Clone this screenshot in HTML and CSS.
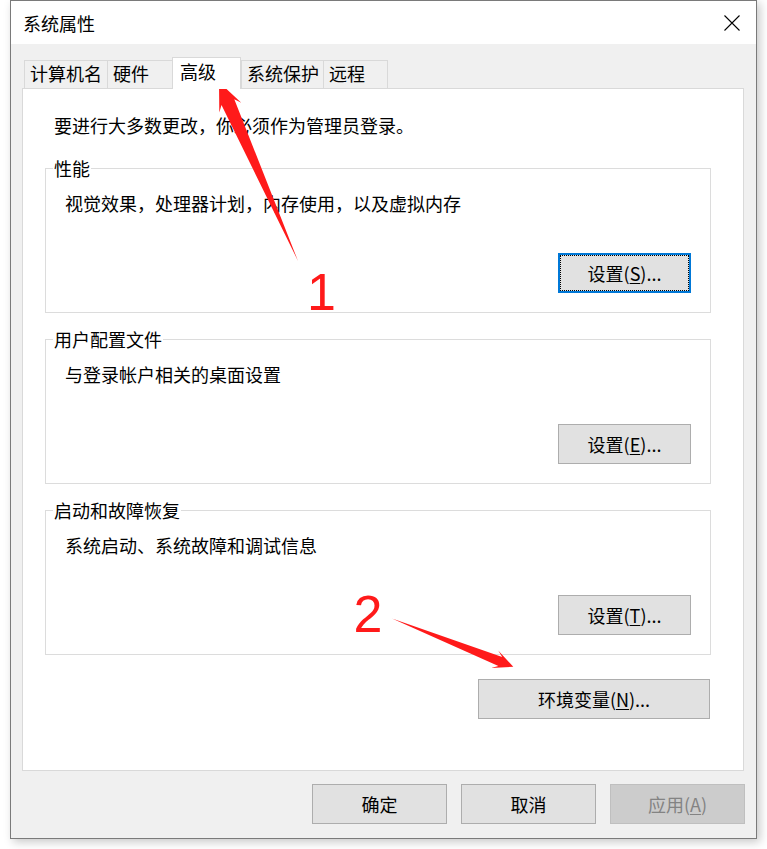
FILE: index.html
```html
<!DOCTYPE html>
<html lang="zh-CN">
<head>
<meta charset="utf-8">
<title>系统属性</title>
<link rel="stylesheet" href="styles.css">
</head>
<body>
<div class="window">
  <div class="titlebar">
    <span class="title">系统属性</span>
    <svg class="close" width="16" height="16" viewBox="0 0 16 16"><path d="M0.5 0.5 L15.5 15.5 M15.5 0.5 L0.5 15.5" stroke="#000" stroke-width="1.1" fill="none"/></svg>
  </div>
  <div class="body">
    <div class="tabs">
      <div class="tab tab-name">计算机名</div>
      <div class="tab tab-hw">硬件</div>
      <div class="tab active">高级</div>
      <div class="tab tab-protect">系统保护</div>
      <div class="tab tab-remote">远程</div>
    </div>
    <div class="panel">
      <p class="note">要进行大多数更改，你必须作为管理员登录。</p>
      <fieldset class="group">
        <legend>性能</legend>
        <p class="desc">视觉效果，处理器计划，内存使用，以及虚拟内存</p>
        <div class="row"><button class="btn focus">设置(<u>S</u>)...</button></div>
      </fieldset>
      <fieldset class="group">
        <legend>用户配置文件</legend>
        <p class="desc">与登录帐户相关的桌面设置</p>
        <div class="row"><button class="btn">设置(<u>E</u>)...</button></div>
      </fieldset>
      <fieldset class="group">
        <legend>启动和故障恢复</legend>
        <p class="desc">系统启动、系统故障和调试信息</p>
        <div class="row"><button class="btn">设置(<u>T</u>)...</button></div>
      </fieldset>
      <div class="env-row"><button class="btn env">环境变量(<u>N</u>)...</button></div>
    </div>
    <div class="footer">
      <button class="btn wide">确定</button>
      <button class="btn wide">取消</button>
      <button class="btn wide disabled">应用(<u>A</u>)</button>
    </div>
  </div>
</div>
<svg class="annot" width="767" height="849" viewBox="0 0 767 849">
  <polygon fill="#ff1a1a" points="219,82 241.3,102.8 234.3,99.3 298,261 221.5,105 219.3,112.5"/>
  <polygon fill="#ff1a1a" points="513.3,666.7 491.2,668.1 498.4,666.1 392,618.5 502.2,656.9 498.2,650.5"/>
  <text class="num" x="307" y="310">1</text>
  <text class="num" x="353.5" y="632">2</text>
</svg>
</body>
</html>
```
FILE: styles.css
```css
* { box-sizing: border-box; }
html, body { margin: 0; background: #fff; }
body {
  font-family: "Noto Sans CJK SC", "Microsoft YaHei", sans-serif;
  font-size: 18px;
  color: #000;
  width: 767px;
  height: 849px;
  position: relative;
  overflow: hidden;
}
.window {
  margin-left: 10px;
  width: 747px;
  height: 839px;
  border: 1px solid #7a7a7a;
  background: #f0f0f0;
  box-shadow: 3px 3px 9px rgba(0, 0, 0, 0.22);
  display: flex;
  flex-direction: column;
}
.titlebar {
  height: 43px;
  flex: none;
  background: #fff;
  display: flex;
  align-items: center;
  justify-content: space-between;
  padding: 0 16px 0 12px;
}
.title { line-height: 24px; }
.close { display: block; }
.body {
  flex: 1;
  padding: 13px 11px 0 11px;
}
.tabs {
  display: flex;
  align-items: flex-end;
  height: 31px;
  margin-left: 2px;
}
.tab {
  height: 28px;
  border: 1px solid #d9d9d9;
  border-bottom: 0;
  border-right: 0;
  padding-left: 5px;
  line-height: 24px;
  background: #f0f0f0;
  white-space: nowrap;
}
.tab-name { width: 83px; }
.tab-hw { width: 65px; padding-left: 5px; }
.tab.active {
  width: 69px;
  height: 32px;
  margin-bottom: -1px;
  border-right: 1px solid #d9d9d9;
  background: #fff;
  position: relative;
  z-index: 1;
  padding-left: 7px;
  line-height: 26px;
}
.tab-protect { width: 82px; }
.tab-remote { width: 65px; border-right: 1px solid #d9d9d9; }
.panel {
  background: #fff;
  border: 1px solid #d9d9d9;
  margin-right: 1px;
  padding: 24px 32px 51px 22px;
}
.note {
  margin: 0 0 0 9px;
  line-height: 24px;
}
.group {
  margin: 19px 0 0 0;
  padding: 0 19px 19px 7px;
  border: 1px solid #dcdcdc;
  min-width: 0;
}
.group + .group { margin-top: 14px; }
.group legend {
  padding: 0 1px;
  line-height: 24px;
}
.desc {
  margin: 11px 0 0 12px;
  line-height: 24px;
}
.row {
  display: flex;
  justify-content: flex-end;
  margin-top: 38px;
}
.btn {
  width: 133px;
  height: 40px;
  margin: 0;
  padding: 0;
  background: #e1e1e1;
  border: 1px solid #adadad;
  font: inherit;
  color: #000;
  line-height: 24px;
  display: flex;
  align-items: center;
  justify-content: center;
}
.btn u { text-underline-offset: 2px; }
.btn.focus {
  border: 2px solid #0078d7;
  outline: 1px dotted #000;
  outline-offset: -3px;
}
.env-row {
  display: flex;
  justify-content: flex-end;
  margin-top: 24px;
}
.btn.env { width: 232px; margin-right: 1px; }
.footer {
  display: flex;
  justify-content: flex-end;
  gap: 14px;
  margin-top: 13px;
}
.btn.wide { width: 135px; }
.btn.disabled {
  background: #cccccc;
  border-color: #bfbfbf;
  color: #838383;
}
.annot {
  position: absolute;
  left: 0;
  top: 0;
  pointer-events: none;
}
.num {
  font-family: "Liberation Sans", Arial, sans-serif;
  font-size: 52px;
  fill: #ff1a1a;
}
```
